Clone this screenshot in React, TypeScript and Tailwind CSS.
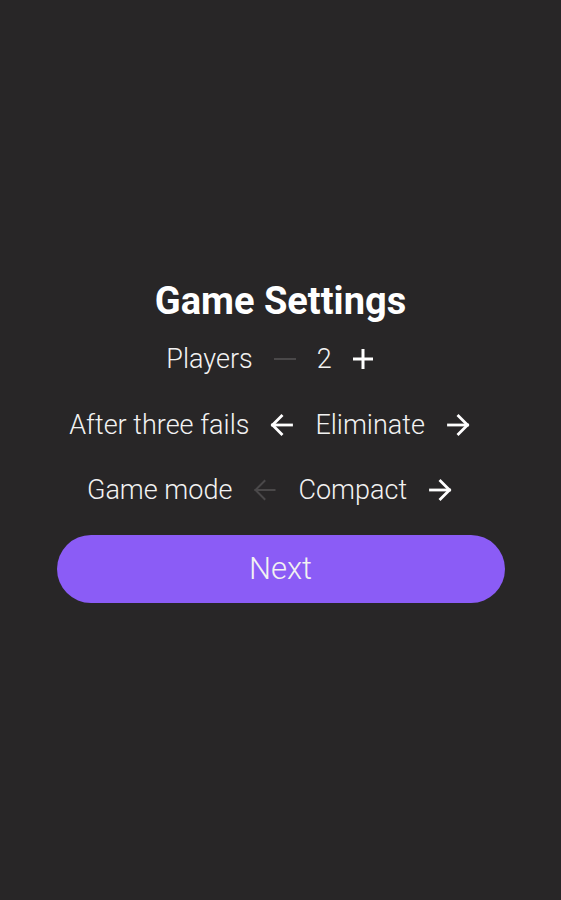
function Arrow({ dir, dim }: { dir: 'left' | 'right'; dim?: boolean }) {
  return (
    <svg
      width="24"
      height="24"
      viewBox="0 0 24 24"
      fill="none"
      stroke="currentColor"
      strokeWidth={dim ? 2 : 2.8}
      strokeLinecap="square"
      className={dim ? 'text-[#4a4849]' : 'text-white'}
      style={dir === 'left' ? { transform: 'scaleX(-1)' } : undefined}
    >
      <path d="M2.5 12h19" />
      <path d="M12.5 3l9 9-9 9" />
    </svg>
  );
}

function MinusIcon() {
  return (
    <svg width="22" height="22" viewBox="0 0 22 22" className="text-[#4a4849]" stroke="currentColor" strokeWidth={2}>
      <path d="M0 11h22" />
    </svg>
  );
}

function PlusIcon() {
  return (
    <svg width="20" height="20" viewBox="0 0 20 20" className="text-white" stroke="currentColor" strokeWidth={3}>
      <path d="M0 10h20M10 0v20" />
    </svg>
  );
}

export default function App() {
  return (
    <div
      className="w-full min-h-[900px] bg-[#282627] flex flex-col items-center pt-[279px] text-white"
      style={{ fontFamily: 'Roboto, "Noto Sans", sans-serif' }}
    >
      <h1 className="text-[38px] leading-[44px] font-bold">Game Settings</h1>

      <div className="mt-[12px] h-12 pr-[22px] flex items-center gap-[21px] text-[27px] font-light text-[#f2f2f2]">
        <span>Players</span>
        <button className="flex items-center">
          <MinusIcon />
        </button>
        <span>2</span>
        <button className="flex items-center">
          <PlusIcon />
        </button>
      </div>

      <div className="mt-[18px] h-12 pr-[22px] flex items-center gap-[21px] text-[27px] font-light text-[#f2f2f2]">
        <span>After three fails</span>
        <button className="flex items-center">
          <Arrow dir="left" />
        </button>
        <span>Eliminate</span>
        <button className="flex items-center">
          <Arrow dir="right" />
        </button>
      </div>

      <div className="mt-[17px] h-12 pr-[22px] flex items-center gap-[21px] text-[27px] font-light text-[#f2f2f2]">
        <span>Game mode</span>
        <button className="flex items-center">
          <Arrow dir="left" dim />
        </button>
        <span>Compact</span>
        <button className="flex items-center">
          <Arrow dir="right" />
        </button>
      </div>

      <button className="mt-[21px] w-[448px] h-[68px] rounded-full bg-[#8b5cf6] text-[31px] font-light text-[#f2f2f2]">
        Next
      </button>
    </div>
  );
}
